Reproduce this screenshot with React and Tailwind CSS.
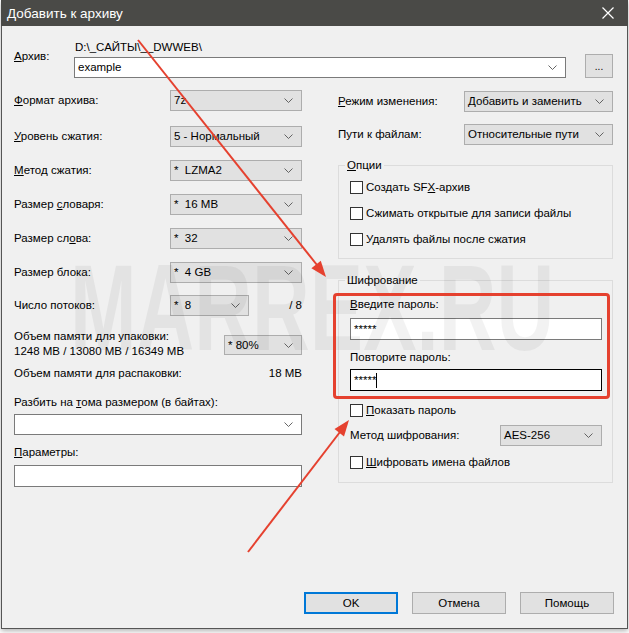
import React from 'react';

const Chevron = () => (
  <svg width="9" height="5" viewBox="0 0 9 5" className="shrink-0">
    <polyline points="0.5,0.5 4.5,4.5 8.5,0.5" fill="none" stroke="#555" strokeWidth="0.9" />
  </svg>
);

// gray read-only style combobox
const Combo = ({ value, className = '' }) => (
  <div
    className={`flex items-center justify-between h-[21px] pl-[3px] pr-[8px] bg-[#e1e1e1] border border-[#adadad] whitespace-pre ${className}`}
  >
    <span>{value}</span>
    <Chevron />
  </div>
);

// white editable combobox
const EditCombo = ({ value = '', className = '' }) => (
  <div
    className={`flex items-center justify-between h-[21px] pl-[3px] pr-[8px] bg-white border border-[#7a7a7a] ${className}`}
  >
    <span>{value}</span>
    <Chevron />
  </div>
);

const Checkbox = ({ children, className = '' }) => (
  <div className={`flex items-center h-[15px] ml-[11px] ${className}`}>
    <div className="w-[13px] h-[13px] bg-white border border-[#333]" />
    <span className="ml-[3px]">{children}</span>
  </div>
);

const Row = ({ label, value, className = '' }) => (
  <div className={`flex items-center justify-between h-[21px] ${className}`}>
    <span>{label}</span>
    <Combo value={value} className="w-[132px]" />
  </div>
);

const Button = ({ children, primary }) => (
  <div
    className={`flex items-center justify-center w-[94px] h-[22px] bg-[#e1e1e1] ${
      primary ? 'border-2 border-[#0078d7]' : 'border border-[#adadad]'
    }`}
  >
    {children}
  </div>
);

const App = () => {
  return (
    <div className="relative w-[629px] h-[633px] bg-white font-['Liberation_Sans',Arial,sans-serif] text-[11.5px] leading-[15px] text-black overflow-hidden">
      <div className="ml-[1px] w-[627px] h-[629px] flex flex-col bg-[#f0f0f0] border border-[#555] shadow-[0_2px_5px_rgba(0,0,0,0.3)]">
        {/* title bar */}
        <div className="flex items-center justify-between h-[26px] -mx-[1px] -mt-[1px] pl-[6px] pr-[14px] bg-[#4a4a47] text-white">
          <span className="text-[13.5px]">Добавить к архиву</span>
          <svg width="12" height="12" viewBox="0 0 12 12">
            <path d="M0.5 0.5 L11.5 11.5 M11.5 0.5 L0.5 11.5" stroke="#fff" strokeWidth="1.2" />
          </svg>
        </div>

        <div className="flex-1 flex flex-col pl-[12px] pr-[13px]">
          {/* archive */}
          <div className="flex mt-[14px]">
            <div className="w-[60px] pt-[9px]">
              <u>А</u>рхив:
            </div>
            <div className="flex flex-col">
              <div className="h-[14px] leading-[14px] pl-[1px]">{'D:\\_САЙТЫ\\__DWWEB\\'}</div>
              <div className="flex items-end">
                <EditCombo value="example" className="w-[492px]" />
                <div className="ml-[19px] w-[28px] h-[24px] flex items-center justify-center bg-[#e1e1e1] border border-[#adadad] text-[10px]">
                  ...
                </div>
              </div>
            </div>
          </div>

          <div className="flex mt-[12px]">
            {/* left column */}
            <div className="w-[288px] flex flex-col">
              <Row label={<><u>Ф</u>ормат архива:</>} value="7z" />
              <Row label={<><u>У</u>ровень сжатия:</>} value="5 - Нормальный" className="mt-[15px]" />
              <Row label={<><u>М</u>етод сжатия:</>} value="*  LZMA2" className="mt-[13px]" />
              <Row label={<>Размер <u>с</u>ловаря:</>} value="*  16 MB" className="mt-[13px]" />
              <Row label={<>Размер сл<u>о</u>ва:</>} value="*  32" className="mt-[13px]" />
              <Row label="Размер блока:" value="*  4 GB" className="mt-[13px]" />
              <div className="flex items-center h-[21px] mt-[12px]">
                <span className="w-[156px]">Число потоков:</span>
                <Combo value="*  8" className="w-[79px]" />
                <span className="flex-1 text-right">/ 8</span>
              </div>
              <div className="flex items-start justify-between mt-[13px]">
                <div>
                  <div>Объем памяти для упаковки:</div>
                  <div>1248 MB / 13080 MB / 16349 MB</div>
                </div>
                <Combo value="* 80%" className="w-[78px] !h-[20px] mt-[6px]" />
              </div>
              <div className="flex justify-between mt-[7px]">
                <span>Объем памяти для распаковки:</span>
                <span>18 MB</span>
              </div>
              <div className="mt-[14px]">
                Разбить на <u>т</u>ома размером (в байтах):
              </div>
              <EditCombo className="mt-[4px]" />
              <div className="mt-[10px]">
                <u>П</u>араметры:
              </div>
              <div className="mt-[5px] h-[22px] bg-white border border-[#7a7a7a]" />
            </div>

            {/* right column */}
            <div className="ml-[36px] w-[275px] flex flex-col">
              <div className="flex items-center justify-between h-[21px] mt-[1px]">
                <span>
                  <u>Р</u>ежим изменения:
                </span>
                <Combo value="Добавить и заменить" className="w-[149px]" />
              </div>
              <div className="flex items-center justify-between h-[21px] mt-[12px]">
                <span>Пути к файлам:</span>
                <Combo value="Относительные пути" className="w-[149px]" />
              </div>

              <fieldset className="mt-[13px] border border-[#dcdcdc] pb-[11px]">
                <legend className="ml-[6px] px-[2px]">
                  <u>О</u>пции
                </legend>
                <Checkbox className="mt-[7px]">
                  Создать SF<u>X</u>-архив
                </Checkbox>
                <Checkbox className="mt-[11px]">Сжимать открытые для записи файлы</Checkbox>
                <Checkbox className="mt-[11px]">Удалять файлы после сжатия</Checkbox>
              </fieldset>

              <fieldset className="mt-[14px] border border-[#dcdcdc] pb-[12px]">
                <legend className="ml-[6px] px-[2px]">Шифрование</legend>
                <div className="ml-[11px] mt-[9px]">
                  <u>В</u>ведите пароль:
                </div>
                <div className="ml-[11px] mt-[6px] w-[252px] h-[22px] pl-[3px] bg-white border border-[#7a7a7a] leading-[20px]">
                  *****
                </div>
                <div className="ml-[11px] mt-[10px]">Повторите пароль:</div>
                <div className="ml-[11px] mt-[4px] w-[252px] h-[22px] pl-[3px] flex items-center bg-white border border-black">
                  <span>*****</span>
                  <span className="w-[1px] h-[15px] bg-black" />
                </div>
                <Checkbox className="mt-[12px]">
                  <u>П</u>оказать пароль
                </Checkbox>
                <div className="ml-[11px] mt-[7px] w-[252px] h-[21px] flex items-center justify-between">
                  <span>Метод шифрования:</span>
                  <Combo value="AES-256" className="w-[102px]" />
                </div>
                <Checkbox className="mt-[9px]">
                  <u>Ш</u>ифровать имена файлов
                </Checkbox>
              </fieldset>
            </div>
          </div>

          {/* buttons */}
          <div className="mt-auto mb-[14px] flex justify-end gap-[14px]">
            <Button primary>OK</Button>
            <Button>Отмена</Button>
            <Button>Помощь</Button>
          </div>
        </div>
      </div>

      {/* watermark */}
      <div className="absolute left-[70px] top-[246px] origin-left scale-x-[0.65] text-[123px] leading-none font-bold text-black/[0.05] whitespace-nowrap pointer-events-none">
        MARREX.RU
      </div>

      {/* annotation: red frame */}
      <div className="absolute left-[333px] top-[293px] w-[277px] h-[106px] border-[3px] border-[#e5412f] rounded-[4px] pointer-events-none" />

      {/* annotation: arrows */}
      <svg className="absolute inset-0 pointer-events-none" width="629" height="633" viewBox="0 0 629 633">
        <line x1="138" y1="40" x2="317" y2="265" stroke="#e5412f" strokeWidth="2" />
        <polygon points="326,277 311.4,268.2 320.8,260.7" fill="#e5412f" />
        <line x1="248" y1="552" x2="340" y2="432" stroke="#e5412f" strokeWidth="2" />
        <polygon points="349,420 344,436.4 334.5,429" fill="#e5412f" />
      </svg>
    </div>
  );
};

export default App;
